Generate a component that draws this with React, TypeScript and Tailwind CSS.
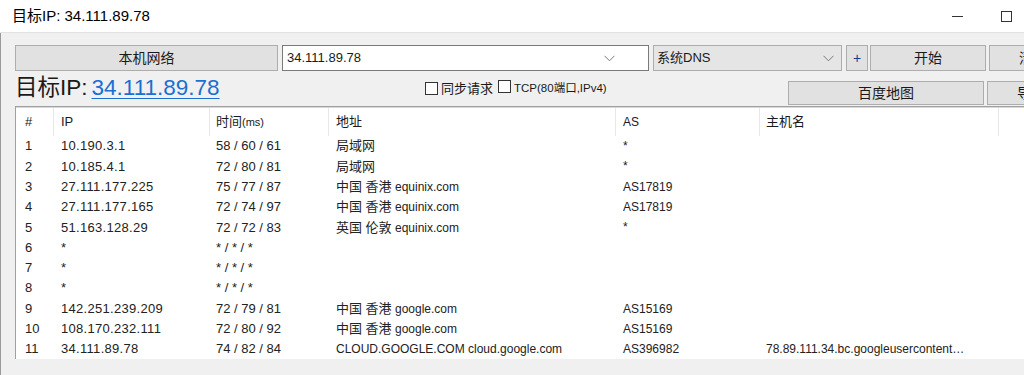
import React from "react";

const FONT = { fontFamily: '"Liberation Sans", "Noto Sans CJK SC", sans-serif' };

type Hop = { n: string; ip: string; time: string; loc: string; dom?: string; as: string; host?: string };

const hops: Hop[] = [
  { n: "1", ip: "10.190.3.1", time: "58 / 60 / 61", loc: "局域网", as: "*" },
  { n: "2", ip: "10.185.4.1", time: "72 / 80 / 81", loc: "局域网", as: "*" },
  { n: "3", ip: "27.111.177.225", time: "75 / 77 / 87", loc: "中国 香港", dom: "equinix.com", as: "AS17819" },
  { n: "4", ip: "27.111.177.165", time: "72 / 74 / 97", loc: "中国 香港", dom: "equinix.com", as: "AS17819" },
  { n: "5", ip: "51.163.128.29", time: "72 / 72 / 83", loc: "英国 伦敦", dom: "equinix.com", as: "*" },
  { n: "6", ip: "*", time: "* / * / *", loc: "", as: "" },
  { n: "7", ip: "*", time: "* / * / *", loc: "", as: "" },
  { n: "8", ip: "*", time: "* / * / *", loc: "", as: "" },
  { n: "9", ip: "142.251.239.209", time: "72 / 79 / 81", loc: "中国 香港", dom: "google.com", as: "AS15169" },
  { n: "10", ip: "108.170.232.111", time: "72 / 80 / 92", loc: "中国 香港", dom: "google.com", as: "AS15169" },
  {
    n: "11",
    ip: "34.111.89.78",
    time: "74 / 82 / 84",
    loc: "",
    dom: "CLOUD.GOOGLE.COM cloud.google.com",
    as: "AS396982",
    host: "78.89.111.34.bc.googleusercontent…",
  },
];

function Chevron() {
  return (
    <svg width="11" height="7" viewBox="0 0 11 7" className="shrink-0">
      <polyline points="0.5,0.8 5.5,5.8 10.5,0.8" fill="none" stroke="#7a7a7a" strokeWidth="1" />
    </svg>
  );
}

function Btn({ w, children, className = "" }: { w: string; children: React.ReactNode; className?: string }) {
  return (
    <div
      className={`${w} shrink-0 flex items-center justify-center border border-[#adadad] bg-[#e1e1e1] text-[14px] text-[#1a1a1a] ${className}`}
    >
      {children}
    </div>
  );
}

function Box() {
  return <span className="inline-block h-[13px] w-[13px] shrink-0 border border-[#333] bg-white" />;
}

export default function App() {
  return (
    <div className="h-[375px] w-[1024px] overflow-hidden bg-[#f0f0f0] text-[#1a1a1a]" style={FONT}>
      {/* title bar */}
      <div className="flex h-[33px] items-center border-b border-[#e3e3e3] bg-white pl-[12px]">
        <span className="text-[15px] text-black">目标IP: 34.111.89.78</span>
        <div className="ml-auto flex items-center">
          <span className="mr-[38px] block h-px w-[11px] bg-[#333]" />
          <span className="mr-[12px] block h-[11px] w-[11px] border border-[#333]" />
        </div>
      </div>

      <div className="h-[342px] overflow-hidden border-l border-[#9a9a9a] pl-[14px] pt-[12px]">
        {/* row 1 */}
        <div className="flex h-[26px] items-stretch">
          <Btn w="w-[263px]">本机网络</Btn>
          <div className="ml-[4px] flex w-[367px] shrink-0 items-center border border-[#7a7a7a] bg-white pl-[4px] pr-[5px] text-[13px]">
            <span>34.111.89.78</span>
            <span className="ml-auto mr-[28px]"><Chevron /></span>
          </div>
          <div className="ml-[4px] flex w-[189px] shrink-0 items-center border border-[#adadad] bg-[#e5e5e5] pl-[3px] pr-[7px] text-[13px]">
            <span>系统DNS</span>
            <span className="ml-auto"><Chevron /></span>
          </div>
          <Btn w="w-[22px]" className="ml-[4px] text-[#1a3a8a]">+</Btn>
          <Btn w="w-[116px]" className="ml-[2px]">开始</Btn>
          <Btn w="w-[60px]" className="ml-[3px] justify-start pl-[29px]">清</Btn>
        </div>

        {/* row 2 */}
        <div className="flex h-[35px] items-center">
          <div className="flex w-[410px] shrink-0 items-baseline whitespace-nowrap text-[22.5px] leading-none">
            <span>目标IP:</span>
            <span className="ml-[4px] text-[#1a6fd1] underline decoration-1 underline-offset-[3px]">34.111.89.78</span>
          </div>
          <div className="flex w-[363px] shrink-0 items-center text-[13px]">
            <Box />
            <span className="ml-[3px]">同步请求</span>
            <span className="ml-[5px]"><Box /></span>
            <span className="ml-[3px] text-[11.5px]">TCP(80端口,IPv4)</span>
          </div>
          <Btn w="w-[196px]" className="mb-[1px] h-[24px] self-end">百度地图</Btn>
          <Btn w="w-[60px]" className="mb-[1px] ml-[3px] h-[24px] self-end justify-start pl-[29px]">导</Btn>
        </div>

        {/* table */}
        <div className="w-[1030px] border-l border-t border-[#a0a0a0] bg-white">
          <div className="flex h-[29px] items-center border-t border-[#d8d8d8] text-[13px]">
            <div className="flex h-full w-[37px] shrink-0 items-center pl-[9px]">#</div>
            <div className="flex h-full w-[156px] shrink-0 items-center border-l border-[#e8e8e8] pl-[7px]">IP</div>
            <div className="flex h-full w-[119px] shrink-0 items-center border-l border-[#e8e8e8] pl-[6px]">
              时间<span className="text-[11px]">(ms)</span>
            </div>
            <div className="flex h-full w-[287px] shrink-0 items-center border-l border-[#e8e8e8] pl-[7px]">地址</div>
            <div className="flex h-full w-[144px] shrink-0 items-center border-l border-[#e8e8e8] pl-[7px] text-[12px]">AS</div>
            <div className="flex h-full w-[239px] shrink-0 items-center border-l border-[#e8e8e8] pl-[6px]">主机名</div>
            <div className="h-full flex-1 border-l border-[#e8e8e8]" />
          </div>
          {hops.map((h) => (
            <div key={h.n} className="flex h-[20.3px] items-center whitespace-nowrap text-[13px] text-[#222]">
              <div className="w-[37px] shrink-0 pl-[9px]">{h.n}</div>
              <div className="w-[156px] shrink-0 pl-[8px] tracking-[0.3px]">{h.ip}</div>
              <div className="w-[119px] shrink-0 pl-[7px]">{h.time}</div>
              <div className="w-[287px] shrink-0 pl-[8px]">
                {h.loc}
                {h.dom ? <span className="text-[12px]">{h.loc ? " " : ""}{h.dom}</span> : null}
              </div>
              <div className="w-[144px] shrink-0 pl-[8px] text-[12px]">{h.as}</div>
              <div className="w-[239px] shrink-0 overflow-hidden pl-[7px] text-[12px]">{h.host ?? ""}</div>
            </div>
          ))}
        </div>
      </div>
    </div>
  );
}
